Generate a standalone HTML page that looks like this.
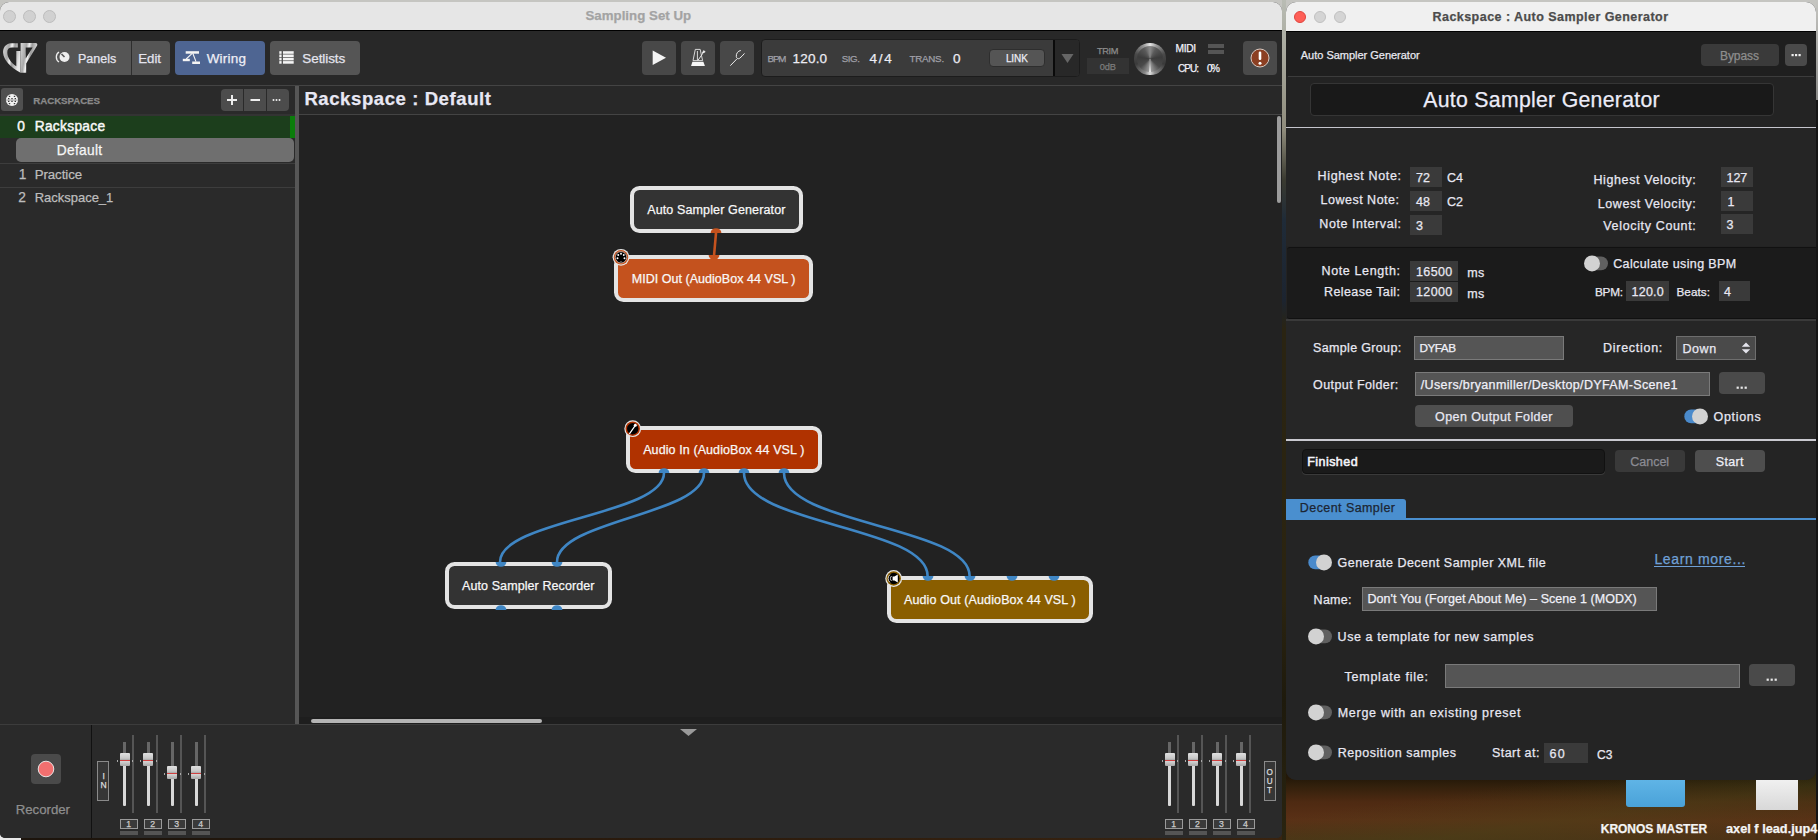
<!DOCTYPE html><html><head><meta charset="utf-8"><style>
*{margin:0;padding:0}
html,body{width:1818px;height:840px;overflow:hidden;background:#3a2c16}
.a{position:absolute}
.t{white-space:nowrap;font-family:"Liberation Sans",sans-serif;-webkit-text-stroke:0.25px currentColor}
</style></head><body>
<div class="a" style="left:0;top:0;width:1818px;height:840px;background:linear-gradient(172deg,rgba(0,0,0,0) 91%,rgba(70,75,25,0.35) 95%,rgba(0,0,0,0) 99%),linear-gradient(#241808 0px,#241808 778px,#32200c 786px,#4e2a12 802px,#5a3016 820px,#4c3216 840px)"></div>
<div class="a" style="left:1816px;top:100px;width:2px;height:740px;background:#151515"></div>
<div class="a" style="left:0px;top:830px;width:1282px;height:10px;background:linear-gradient(90deg,#e8e8e8 0px,#e8e8e8 21px,#1c140c 21px,#2a1a0c 600px,#3a2410 1282px)"></div>
<div class="a" style="left:0px;top:0px;width:1818px;height:14px;background:#c5c5c1"></div>
<div class="a" style="left:1816px;top:0px;width:2px;height:100px;background:linear-gradient(#c5c5c1,#8a8a88)"></div>
<div class="a" style="left:1282px;top:0px;width:4px;height:840px;background:linear-gradient(#b9bcb4 0px,#8f8c7c 130px,#3a3a30 180px,#1f2b38 220px,#1c2430 300px,#2a2412 330px,#2b2410 600px,#1e1a0c 700px,#2a2410 840px)"></div>
<div class="a" style="left:0px;top:2px;width:1282px;height:836px;background:#292929;border-radius:9px 9px 5px 5px;overflow:hidden"></div>
<div class="a" style="left:0px;top:2px;width:1282px;height:28px;background:#e6e6e6;border-radius:9px 9px 0 0"></div>
<div class="a" style="left:0px;top:30px;width:1282px;height:1px;background:#000"></div>
<div class="a" style="left:3px;top:9.5px;width:11px;height:11px;border-radius:50%;background:#d1d1d1;border:0.5px solid #bdbdbd"></div>
<div class="a" style="left:23px;top:9.5px;width:11px;height:11px;border-radius:50%;background:#d1d1d1;border:0.5px solid #bdbdbd"></div>
<div class="a" style="left:43px;top:9.5px;width:11px;height:11px;border-radius:50%;background:#d1d1d1;border:0.5px solid #bdbdbd"></div>
<div class="a t" style="left:585.40px;top:9.00px;font-size:13.25px;line-height:13.25px;color:#a3a3a3;font-weight:700;letter-spacing:0.039px;">Sampling Set Up</div>
<div class="a" style="left:0px;top:31px;width:1282px;height:54px;background:#282828"></div>
<div class="a" style="left:0px;top:85px;width:1282px;height:1px;background:#444"></div>
<div class="a" style="left:46px;top:41px;width:124px;height:34px;background:#555;border-radius:4px"></div>
<div class="a" style="left:131px;top:41px;width:1px;height:34px;background:#2e2e2e"></div>
<div class="a" style="left:175px;top:41px;width:90px;height:34px;background:#4e6592;border-radius:4px"></div>
<div class="a" style="left:270px;top:41px;width:90px;height:34px;background:#555;border-radius:4px"></div>
<div class="a t" style="left:78.00px;top:53.00px;font-size:12.50px;line-height:12.50px;color:#e4e4ee;font-weight:400;letter-spacing:0.030px;">Panels</div>
<div class="a t" style="left:138.30px;top:52.00px;font-size:13.25px;line-height:13.25px;color:#e4e4ee;font-weight:400;letter-spacing:-0.058px;">Edit</div>
<div class="a t" style="left:206.70px;top:52.00px;font-size:13.50px;line-height:13.50px;color:#eeeef6;font-weight:400;letter-spacing:0.190px;">Wiring</div>
<div class="a t" style="left:302.30px;top:52.00px;font-size:13.50px;line-height:13.50px;color:#e4e4ee;font-weight:400;letter-spacing:-0.086px;">Setlists</div>
<svg class="a" style="left:55px;top:49px" width="16" height="16" viewBox="0 0 16 16"><path d="M4 3 A6 6 0 0 0 4 13" stroke="#eee" stroke-width="1.3" fill="none"/><circle cx="9.5" cy="8" r="5" fill="#eee"/><path d="M9.5 8 L6.5 5" stroke="#555" stroke-width="1.6"/></svg>
<svg class="a" style="left:178px;top:44px" width="30" height="24" viewBox="178 44 30 24"><g fill="#f4f4f4"><rect x="185.7" y="51.2" width="13.3" height="2.5"/><rect x="182.8" y="58.8" width="7" height="2.4"/><rect x="192.2" y="61.5" width="7.8" height="2.5"/></g><path d="M192.2 53.3 L186.2 59 M192.8 53.3 L196 61.6" stroke="#f4f4f4" stroke-width="1.1"/></svg>
<svg class="a" style="left:272px;top:44px" width="30" height="24" viewBox="272 44 30 24"><g fill="#f4f4f4"><rect x="279.3" y="51.2" width="2.3" height="2.6"/><rect x="283" y="51.2" width="10.7" height="2.6"/><rect x="279.3" y="54.5" width="2.3" height="2.6"/><rect x="283" y="54.5" width="10.7" height="2.6"/><rect x="279.3" y="57.8" width="2.3" height="2.6"/><rect x="283" y="57.8" width="10.7" height="2.6"/><rect x="279.3" y="61.1" width="2.3" height="2.6"/><rect x="283" y="61.1" width="10.7" height="2.6"/></g></svg>
<svg class="a" style="left:0px;top:38px" width="42" height="40" viewBox="0 0 42 40"><defs><linearGradient id="gpg" x1="0" y1="0" x2="1" y2="0.3"><stop offset="0" stop-color="#d8d8d8"/><stop offset="0.35" stop-color="#a8a8a8"/><stop offset="0.5" stop-color="#f4f4f4"/><stop offset="0.65" stop-color="#9a9a9a"/><stop offset="1" stop-color="#e8e8e8"/></linearGradient></defs>
<path d="M17.8 5.2 L11 5.3 C5.5 5.8 2.8 9.8 3.1 14.8 C3.6 22 10 29 20.5 34.8 L20.5 13 L16.3 13 L16.3 28.2 C11.2 25 7.6 20.2 7.3 14.8 C7.1 11.2 8.8 9.4 12 9.4 L17.8 9.4 Z" fill="url(#gpg)"/>
<path d="M20.6 5 L36 5 C37.4 5.2 37.6 6.8 37 7.8 L26.2 25.5 L26.2 34.8 L20.6 34.8 Z M25.7 9.4 L25.7 20.5 L32.6 9.4 Z" fill="url(#gpg)" fill-rule="evenodd"/></svg>
<div class="a" style="left:642px;top:41px;width:34px;height:34px;background:#484848;border-radius:4px"></div>
<div class="a" style="left:681px;top:41px;width:34px;height:34px;background:#484848;border-radius:4px"></div>
<div class="a" style="left:720px;top:41px;width:34px;height:34px;background:#484848;border-radius:4px"></div>
<svg class="a" style="left:640px;top:38px" width="120" height="40" viewBox="640 38 120 40">
<path d="M652.7 50.6 L666 57.8 L652.7 65 Z" fill="#f4f4f4"/>
<path d="M695.3 49.4 L700.2 49.4 L702.6 60.6 L693 60.6 Z M697.4 51 V60.5" fill="none" stroke="#e8e8e8" stroke-width="0.9"/>
<path d="M692.4 61.8 L703.4 61.8 L704.9 66 L691.1 66 Z" fill="#f6f6f6"/>
<path d="M698 60.3 L703.6 52.2" stroke="#e8e8e8" stroke-width="1"/>
<path d="M702.4 52.8 L703.8 50.6 L705.2 52 Z" fill="#f4f4f4" stroke="#f4f4f4" stroke-width="0.8"/>
<path d="M730.3 65.7 L736.8 59" stroke="#eee" stroke-width="1"/>
<path d="M740.8 50.5 C738 50.8 736 53.5 736.3 56.5 C736.5 58.5 738 59.2 739.5 58.4 C741.5 57 743 55 744.5 53.4" fill="none" stroke="#eee" stroke-width="1"/>
</svg>
<div class="a" style="left:761px;top:39px;width:319px;height:38px;background:#3b3b3b;border:1px solid #1c1c1c;border-radius:4px;box-sizing:border-box"></div>
<div class="a" style="left:1055px;top:40px;width:24px;height:36px;background:#282828;border-radius:0 3px 3px 0"></div>
<div class="a" style="left:1053px;top:40px;width:2px;height:36px;background:#0a0a0a"></div>
<svg class="a" style="left:1061px;top:53px" width="13" height="11" viewBox="0 0 13 11"><path d="M0.5 1 L12.5 1 L6.5 10 Z" fill="#666"/></svg>
<div class="a t" style="left:767.50px;top:54.00px;font-size:9.75px;line-height:9.75px;color:#a0a0a8;font-weight:400;letter-spacing:-1.113px;">BPM</div>
<div class="a t" style="left:792.60px;top:52.00px;font-size:13.50px;line-height:13.50px;color:#ececf4;font-weight:400;letter-spacing:0.188px;">120.0</div>
<div class="a t" style="left:841.80px;top:54.00px;font-size:9.75px;line-height:9.75px;color:#a0a0a8;font-weight:400;letter-spacing:-0.467px;">SIG.</div>
<div class="a t" style="left:869.60px;top:52.00px;font-size:13.50px;line-height:13.50px;color:#ececf4;font-weight:400;letter-spacing:1.725px;">4/4</div>
<div class="a t" style="left:909.40px;top:54.00px;font-size:9.75px;line-height:9.75px;color:#a0a0a8;font-weight:400;letter-spacing:-0.210px;">TRANS.</div>
<div class="a t" style="left:952.90px;top:52.00px;font-size:13.50px;line-height:13.50px;color:#ececf4;font-weight:400;letter-spacing:0.000px;">0</div>
<div class="a" style="left:989px;top:48.6px;width:56px;height:18.800000000000004px;background:#555;border-radius:4px;border:1px solid #2e2e2e;box-sizing:border-box"></div>
<div class="a t" style="left:1005.90px;top:54.00px;font-size:10.00px;line-height:10.00px;color:#ececf4;font-weight:400;letter-spacing:-0.083px;">LINK</div>
<div class="a t" style="left:1097.00px;top:47.00px;font-size:9.25px;line-height:9.25px;color:#8c8c8c;font-weight:400;letter-spacing:-0.375px;">TRIM</div>
<div class="a" style="left:1087px;top:58px;width:42px;height:16px;background:#333"></div>
<div class="a t" style="left:1099.70px;top:63.00px;font-size:9.25px;line-height:9.25px;color:#7c7c7c;font-weight:400;letter-spacing:-0.100px;">0dB</div>
<div class="a" style="left:1134.3px;top:43px;width:31.5px;height:31.5px;border-radius:50%;background:conic-gradient(from 0deg,#e8e8e8 0deg,#9a9a9a 25deg,#4a4a4a 70deg,#3a3a3a 110deg,#8a8a8a 160deg,#e0e0e0 180deg,#8a8a8a 200deg,#3a3a3a 250deg,#4a4a4a 290deg,#9a9a9a 335deg,#e8e8e8 360deg)"></div>
<div class="a" style="left:1136.8px;top:45.5px;width:26.5px;height:26.5px;border-radius:50%;background:conic-gradient(from 0deg,#8a8a8a 0deg,#5a5a5a 30deg,#3c3c3c 80deg,#4a4a4a 130deg,#9a9a9a 175deg,#bdbdbd 180deg,#9a9a9a 185deg,#4a4a4a 230deg,#3c3c3c 280deg,#5a5a5a 330deg,#8a8a8a 360deg)"></div>
<div class="a" style="left:1149px;top:59px;width:2px;height:13px;background:linear-gradient(#777,#e8e8e8)"></div>
<div class="a t" style="left:1175.60px;top:44.00px;font-size:10.25px;line-height:10.25px;color:#f2f2fa;font-weight:400;letter-spacing:-0.342px;">MIDI</div>
<div class="a" style="left:1208px;top:44px;width:16px;height:3.5px;background:#555"></div>
<div class="a" style="left:1208px;top:50px;width:16px;height:3.5px;background:#555"></div>
<div class="a t" style="left:1178.00px;top:64.00px;font-size:10.00px;line-height:10.00px;color:#f2f2fa;font-weight:400;letter-spacing:-0.958px;">CPU:</div>
<div class="a t" style="left:1207.00px;top:64.00px;font-size:10.00px;line-height:10.00px;color:#f2f2fa;font-weight:400;letter-spacing:-1.500px;">0%</div>
<div class="a" style="left:1243px;top:41px;width:34px;height:34px;background:#4a4a4a;border-radius:4px"></div>
<svg class="a" style="left:1249px;top:47px" width="22" height="22" viewBox="0 0 22 22"><circle cx="11" cy="11" r="9" fill="#8b3f22" stroke="#d8c8c0" stroke-width="1"/><rect x="9.7" y="4.5" width="2.6" height="8.5" rx="1.2" fill="#fff"/><circle cx="11" cy="16.2" r="1.5" fill="#fff"/></svg>
<div class="a" style="left:0px;top:86px;width:295px;height:638px;background:#2a2a2a"></div>
<div class="a" style="left:295px;top:86px;width:4px;height:638px;background:#565656"></div>
<div class="a" style="left:1.2px;top:88.3px;width:21.8px;height:22.700000000000003px;background:#505050;border-radius:3px"></div>
<svg class="a" style="left:0px;top:86px" width="30" height="28" viewBox="0 86 30 28"><circle cx="12" cy="100" r="6.1" fill="#f2f2f2"/><rect x="6" y="99.3" width="12" height="1.6" fill="#bdbdbd"/><rect x="8.8" y="95.80000000000001" width="1.4" height="1.2" fill="#3a3a3a"/><rect x="13.8" y="95.80000000000001" width="1.4" height="1.2" fill="#3a3a3a"/><rect x="7.999999999999999" y="98.0" width="1.4" height="1.2" fill="#3a3a3a"/><rect x="11.3" y="98.0" width="1.4" height="1.2" fill="#3a3a3a"/><rect x="14.600000000000001" y="98.0" width="1.4" height="1.2" fill="#3a3a3a"/><rect x="7.999999999999999" y="100.80000000000001" width="1.4" height="1.2" fill="#3a3a3a"/><rect x="11.3" y="100.80000000000001" width="1.4" height="1.2" fill="#3a3a3a"/><rect x="14.600000000000001" y="100.80000000000001" width="1.4" height="1.2" fill="#3a3a3a"/><rect x="8.8" y="103.0" width="1.4" height="1.2" fill="#3a3a3a"/><rect x="13.8" y="103.0" width="1.4" height="1.2" fill="#3a3a3a"/></svg>
<div class="a t" style="left:33.30px;top:96.00px;font-size:9.75px;line-height:9.75px;color:#8a8a8a;font-weight:700;letter-spacing:-0.089px;">RACKSPACES</div>
<div class="a" style="left:221px;top:89px;width:68px;height:22px;background:#4c4c4c;border-radius:4px"></div>
<div class="a" style="left:243px;top:89px;width:1px;height:22px;background:#2a2a2a"></div>
<div class="a" style="left:266px;top:89px;width:1px;height:22px;background:#2a2a2a"></div>
<svg class="a" style="left:221px;top:89px" width="68" height="22" viewBox="0 0 68 22"><path d="M11 6 V16 M6 11 H16" stroke="#eee" stroke-width="2"/><path d="M29.5 11 H39" stroke="#eee" stroke-width="2"/><g fill="#eee"><circle cx="52.5" cy="11" r="1"/><circle cx="55.5" cy="11" r="1"/><circle cx="58.5" cy="11" r="1"/></g></svg>
<div class="a" style="left:0px;top:114px;width:295px;height:2px;background:#333"></div>
<div class="a" style="left:0px;top:116px;width:290px;height:22px;background:#1c3e1c"></div>
<div class="a" style="left:290px;top:116px;width:5px;height:22px;background:#0b7d0b"></div>
<div class="a t" style="left:17.20px;top:120.00px;font-size:13.75px;line-height:13.75px;color:#f8f8f8;font-weight:400;letter-spacing:0.000px;-webkit-text-stroke:0.45px currentColor">0</div>
<div class="a t" style="left:34.70px;top:120.00px;font-size:13.75px;line-height:13.75px;color:#f8f8f8;font-weight:400;letter-spacing:0.300px;-webkit-text-stroke:0.45px currentColor">Rackspace</div>
<div class="a" style="left:15.8px;top:138.3px;width:278.2px;height:23.299999999999983px;background:#6f6f6f;border-radius:5px"></div>
<div class="a t" style="left:56.70px;top:144.00px;font-size:13.75px;line-height:13.75px;color:#f6f6f6;font-weight:400;letter-spacing:0.312px;">Default</div>
<div class="a" style="left:0px;top:162.8px;width:295px;height:1.1999999999999886px;background:#3d3d3d"></div>
<div class="a t" style="left:18.75px;top:168.00px;font-size:13.75px;line-height:13.75px;color:#bdbdbd;font-weight:400;letter-spacing:0.000px;">1</div>
<div class="a t" style="left:34.70px;top:168.00px;font-size:13.25px;line-height:13.25px;color:#bdbdbd;font-weight:400;letter-spacing:-0.068px;">Practice</div>
<div class="a" style="left:0px;top:186.7px;width:295px;height:1.1000000000000227px;background:#3d3d3d"></div>
<div class="a t" style="left:18.20px;top:191.00px;font-size:13.75px;line-height:13.75px;color:#bdbdbd;font-weight:400;letter-spacing:0.000px;">2</div>
<div class="a t" style="left:34.70px;top:191.00px;font-size:13.00px;line-height:13.00px;color:#bdbdbd;font-weight:400;letter-spacing:-0.015px;">Rackspace_1</div>
<div class="a" style="left:299px;top:86px;width:983px;height:28px;background:#282828"></div>
<div class="a" style="left:299px;top:114px;width:983px;height:1px;background:#444"></div>
<div class="a t" style="left:304.40px;top:90.00px;font-size:18.50px;line-height:18.50px;color:#e8e8f4;font-weight:700;letter-spacing:0.596px;">Rackspace : Default</div>
<div class="a" style="left:299px;top:115px;width:983px;height:602px;background:#222"></div>
<div class="a" style="left:1277px;top:116px;width:4px;height:87px;background:#9c9c9c;border-radius:2px"></div>
<div class="a" style="left:299px;top:717px;width:983px;height:7px;background:#1e1e1e"></div>
<div class="a" style="left:311px;top:719px;width:231px;height:4px;background:#b4b4b4;border-radius:2px"></div>
<svg class="a" style="left:299px;top:115px" width="983" height="602" viewBox="299 115 983 602">
<g fill="none" stroke="#3f86c4" stroke-width="2.6">
<path d="M664 473 C664 515 500 520 500 562"/>
<path d="M704 473 C704 515 557 520 557 562"/>
<path d="M744 473 C744 525 927.6 526 927.6 576"/>
<path d="M784 473 C784 525 969.6 526 969.6 576"/>
</g>
<path d="M716 233 L714 256" stroke="#c4521e" stroke-width="2.6"/>
</svg>
<div class="a" style="left:630px;top:186px;width:173px;height:47px;background:#333;border:4.2px solid #e4e4e4;border-radius:9.5px;box-sizing:border-box"></div>
<div class="a t" style="left:647.20px;top:204.00px;font-size:12.50px;line-height:12.50px;color:#f8f8f8;font-weight:400;letter-spacing:0.129px;">Auto Sampler Generator</div>
<div class="a" style="left:614px;top:255px;width:199px;height:46.5px;background:#c4521e;border:4.2px solid #e4e4e4;border-radius:9.5px;box-sizing:border-box"></div>
<div class="a t" style="left:631.70px;top:273.00px;font-size:12.50px;line-height:12.50px;color:#f8f8f8;font-weight:400;letter-spacing:0.037px;">MIDI Out (AudioBox 44 VSL )</div>
<div class="a" style="left:626px;top:426px;width:196px;height:47px;background:#b03200;border:4.2px solid #e4e4e4;border-radius:9.5px;box-sizing:border-box"></div>
<div class="a t" style="left:643.20px;top:444.00px;font-size:12.50px;line-height:12.50px;color:#f8f8f8;font-weight:400;letter-spacing:0.095px;">Audio In (AudioBox 44 VSL )</div>
<div class="a" style="left:445px;top:562px;width:167px;height:47px;background:#333;border:4.2px solid #e4e4e4;border-radius:9.5px;box-sizing:border-box"></div>
<div class="a t" style="left:462.00px;top:580.00px;font-size:12.50px;line-height:12.50px;color:#f8f8f8;font-weight:400;letter-spacing:0.094px;">Auto Sampler Recorder</div>
<div class="a" style="left:887px;top:576px;width:206px;height:47px;background:#8a5e00;border:4.2px solid #e4e4e4;border-radius:9.5px;box-sizing:border-box"></div>
<div class="a t" style="left:904.00px;top:594.00px;font-size:12.50px;line-height:12.50px;color:#f8f8f8;font-weight:400;letter-spacing:0.123px;">Audio Out (AudioBox 44 VSL )</div>
<svg class="a" style="left:710px;top:226px" width="12" height="8" viewBox="0 0 12 8"><path d="M0.6 7 A5.4 4.8 0 0 1 11.4 7 Z" fill="#c4521e"/></svg>
<svg class="a" style="left:708px;top:254px" width="12" height="8" viewBox="0 0 12 8"><path d="M0.6 1 L11.4 1 A5.4 4.8 0 0 1 0.6 1 Z" fill="#c4521e"/></svg>
<svg class="a" style="left:658.4px;top:466px" width="12" height="8" viewBox="0 0 12 8"><path d="M0.6 7 A5.4 4.8 0 0 1 11.4 7 Z" fill="#3f86c4"/></svg>
<svg class="a" style="left:698.3px;top:466px" width="12" height="8" viewBox="0 0 12 8"><path d="M0.6 7 A5.4 4.8 0 0 1 11.4 7 Z" fill="#3f86c4"/></svg>
<svg class="a" style="left:738.4px;top:466px" width="12" height="8" viewBox="0 0 12 8"><path d="M0.6 7 A5.4 4.8 0 0 1 11.4 7 Z" fill="#3f86c4"/></svg>
<svg class="a" style="left:778.4px;top:466px" width="12" height="8" viewBox="0 0 12 8"><path d="M0.6 7 A5.4 4.8 0 0 1 11.4 7 Z" fill="#3f86c4"/></svg>
<svg class="a" style="left:494.5px;top:561px" width="12" height="8" viewBox="0 0 12 8"><path d="M0.6 1 L11.4 1 A5.4 4.8 0 0 1 0.6 1 Z" fill="#3f86c4"/></svg>
<svg class="a" style="left:494.5px;top:602.5px" width="12" height="8" viewBox="0 0 12 8"><path d="M0.6 7 A5.4 4.8 0 0 1 11.4 7 Z" fill="#3f86c4"/></svg>
<svg class="a" style="left:551.4px;top:561px" width="12" height="8" viewBox="0 0 12 8"><path d="M0.6 1 L11.4 1 A5.4 4.8 0 0 1 0.6 1 Z" fill="#3f86c4"/></svg>
<svg class="a" style="left:551.4px;top:602.5px" width="12" height="8" viewBox="0 0 12 8"><path d="M0.6 7 A5.4 4.8 0 0 1 11.4 7 Z" fill="#3f86c4"/></svg>
<svg class="a" style="left:921.6px;top:575px" width="12" height="8" viewBox="0 0 12 8"><path d="M0.6 1 L11.4 1 A5.4 4.8 0 0 1 0.6 1 Z" fill="#3f86c4"/></svg>
<svg class="a" style="left:963.6px;top:575px" width="12" height="8" viewBox="0 0 12 8"><path d="M0.6 1 L11.4 1 A5.4 4.8 0 0 1 0.6 1 Z" fill="#3f86c4"/></svg>
<svg class="a" style="left:1005.5px;top:575px" width="12" height="8" viewBox="0 0 12 8"><path d="M0.6 1 L11.4 1 A5.4 4.8 0 0 1 0.6 1 Z" fill="#3f86c4"/></svg>
<svg class="a" style="left:1047.5px;top:575px" width="12" height="8" viewBox="0 0 12 8"><path d="M0.6 1 L11.4 1 A5.4 4.8 0 0 1 0.6 1 Z" fill="#3f86c4"/></svg>
<svg class="a" style="left:299px;top:115px" width="983" height="602" viewBox="299 115 983 602">
<circle cx="621" cy="257.3" r="8.4" fill="#e6e6e6"/><circle cx="621" cy="257.3" r="7.2" fill="#c4521e"/><circle cx="621" cy="257.3" r="5.7" fill="#000"/><circle cx="621" cy="257.3" r="5.7" fill="none" stroke="#ddd" stroke-width="0.6"/><circle cx="621.00" cy="253.70" r="0.95" fill="#fff"/><circle cx="618.24" cy="254.99" r="0.95" fill="#fff"/><circle cx="623.76" cy="254.99" r="0.95" fill="#fff"/><circle cx="617.52" cy="258.23" r="0.95" fill="#fff"/><circle cx="624.48" cy="258.23" r="0.95" fill="#fff"/><path d="M619.8 261.6 A1.4 1.2 0 0 1 622.2 261.6" fill="#fff"/>
<circle cx="632.7" cy="428.7" r="8.4" fill="#e6e6e6"/><circle cx="632.7" cy="428.7" r="7.2" fill="#b03200"/><circle cx="632.7" cy="428.7" r="5.7" fill="#000"/><path d="M629.6 433.6 L635 425.8" stroke="#fff" stroke-width="1.2" stroke-linecap="round"/><circle cx="635.3" cy="425.3" r="1.5" fill="#fff"/>
<circle cx="893.7" cy="578.5" r="8.4" fill="#e6e6e6"/><circle cx="893.7" cy="578.5" r="7.2" fill="#8a5e00"/><circle cx="893.7" cy="578.5" r="5.7" fill="#000"/><path d="M892.6 576.6 L894.4 576.6 L897.8 574.4 L897.8 582.6 L894.4 580.4 L892.6 580.4 Z" fill="#fff"/><path d="M891.6 576 A3.2 3.2 0 0 0 891.6 581 M890 574.6 A5 5 0 0 0 890 582.4" stroke="#fff" stroke-width="0.8" fill="none"/>
</svg>
<div class="a" style="left:0px;top:724px;width:1282px;height:1px;background:#3c3c3c"></div>
<div class="a" style="left:0px;top:725px;width:1282px;height:113px;background:#2a2a2a;border-radius:0 0 5px 5px"></div>
<div class="a" style="left:91px;top:725px;width:1px;height:113px;background:#111"></div>
<svg class="a" style="left:679px;top:728px" width="19" height="9" viewBox="0 0 19 9"><path d="M1 1 L18 1 L9.5 8 Z" fill="#9a9a9a"/></svg>
<div class="a" style="left:31px;top:754px;width:30px;height:30px;background:#4a4a4a;border-radius:4px"></div>
<svg class="a" style="left:36px;top:758.5px" width="20" height="20" viewBox="0 0 20 20"><circle cx="10" cy="10" r="7.8" fill="#f26f6f" stroke="#f0f0f0" stroke-width="0.9"/></svg>
<div class="a t" style="left:15.70px;top:803.00px;font-size:13.25px;line-height:13.25px;color:#8e8e8e;font-weight:400;letter-spacing:-0.029px;">Recorder</div>
<div class="a" style="left:97px;top:761px;width:12px;height:40px;border:1px solid #8a8a8a;background:#363636;box-sizing:border-box"></div>
<div class="a t" style="left:102.40px;top:772.00px;font-size:8.50px;line-height:8.50px;color:#ddd;font-weight:400;letter-spacing:0.000px;">I</div>
<div class="a t" style="left:100.60px;top:781.00px;font-size:8.50px;line-height:8.50px;color:#ddd;font-weight:400;letter-spacing:0.000px;">N</div>
<div class="a" style="left:123.0px;top:741.5px;width:3.0px;height:64.5px;background:#d8d8d8;border-radius:1px"></div>
<div class="a" style="left:123.0px;top:741.5px;width:3.0px;height:11.5px;background:#666"></div>
<div class="a" style="left:132px;top:734.7px;width:2px;height:78.29999999999995px;background:#555"></div>
<div class="a" style="left:119.5px;top:753px;width:10.0px;height:12.5px;background:linear-gradient(#e0e0e0,#c8c8c8 40%,#b0b0b0 50%,#d8d8d8 60%,#a8a8a8);border-radius:1px"></div>
<div class="a" style="left:119.5px;top:759.6px;width:10.0px;height:0.6999999999999318px;background:#d04040"></div>
<div class="a" style="left:116.5px;top:760px;width:0.5999999999999943px;height:2px;background:#aaa"></div>
<div class="a" style="left:131.9px;top:760px;width:0.5999999999999943px;height:2px;background:#aaa"></div>
<div class="a" style="left:120px;top:819px;width:18px;height:10px;border:1px solid #9a9a9a;background:#3a3a3a;box-sizing:border-box"></div>
<div class="a t" style="left:126.30px;top:820.32px;font-size:8.72px;line-height:8.72px;color:#ccc;font-weight:400;letter-spacing:0.000px;">1</div>
<div class="a" style="left:120px;top:831px;width:18px;height:4px;background:#555"></div>
<div class="a" style="left:146.7px;top:741.5px;width:3.0px;height:64.5px;background:#d8d8d8;border-radius:1px"></div>
<div class="a" style="left:146.7px;top:741.5px;width:3.0px;height:11.5px;background:#666"></div>
<div class="a" style="left:156px;top:734.7px;width:2px;height:78.29999999999995px;background:#555"></div>
<div class="a" style="left:143.2px;top:753px;width:10.0px;height:12.5px;background:linear-gradient(#e0e0e0,#c8c8c8 40%,#b0b0b0 50%,#d8d8d8 60%,#a8a8a8);border-radius:1px"></div>
<div class="a" style="left:143.2px;top:759.6px;width:10.0px;height:0.6999999999999318px;background:#d04040"></div>
<div class="a" style="left:140.2px;top:760px;width:0.5999999999999943px;height:2px;background:#aaa"></div>
<div class="a" style="left:155.6px;top:760px;width:0.5999999999999943px;height:2px;background:#aaa"></div>
<div class="a" style="left:144px;top:819px;width:18px;height:10px;border:1px solid #9a9a9a;background:#3a3a3a;box-sizing:border-box"></div>
<div class="a t" style="left:150.30px;top:820.32px;font-size:8.72px;line-height:8.72px;color:#ccc;font-weight:400;letter-spacing:0.000px;">2</div>
<div class="a" style="left:144px;top:831px;width:18px;height:4px;background:#555"></div>
<div class="a" style="left:170.8px;top:741.5px;width:3.0px;height:64.5px;background:#d8d8d8;border-radius:1px"></div>
<div class="a" style="left:170.8px;top:741.5px;width:3.0px;height:24.5px;background:#666"></div>
<div class="a" style="left:180px;top:734.7px;width:2px;height:78.29999999999995px;background:#555"></div>
<div class="a" style="left:167.3px;top:766px;width:10.0px;height:12.5px;background:linear-gradient(#e0e0e0,#c8c8c8 40%,#b0b0b0 50%,#d8d8d8 60%,#a8a8a8);border-radius:1px"></div>
<div class="a" style="left:167.3px;top:772.6px;width:10.0px;height:0.6999999999999318px;background:#d04040"></div>
<div class="a" style="left:164.3px;top:773px;width:0.5999999999999943px;height:2px;background:#aaa"></div>
<div class="a" style="left:179.70000000000002px;top:773px;width:0.5999999999999943px;height:2px;background:#aaa"></div>
<div class="a" style="left:168px;top:819px;width:18px;height:10px;border:1px solid #9a9a9a;background:#3a3a3a;box-sizing:border-box"></div>
<div class="a t" style="left:174.30px;top:820.32px;font-size:8.72px;line-height:8.72px;color:#ccc;font-weight:400;letter-spacing:0.000px;">3</div>
<div class="a" style="left:168px;top:831px;width:18px;height:4px;background:#555"></div>
<div class="a" style="left:194.9px;top:741.5px;width:3.0px;height:64.5px;background:#d8d8d8;border-radius:1px"></div>
<div class="a" style="left:194.9px;top:741.5px;width:3.0px;height:24.5px;background:#666"></div>
<div class="a" style="left:204px;top:734.7px;width:2px;height:78.29999999999995px;background:#555"></div>
<div class="a" style="left:191.4px;top:766px;width:10.0px;height:12.5px;background:linear-gradient(#e0e0e0,#c8c8c8 40%,#b0b0b0 50%,#d8d8d8 60%,#a8a8a8);border-radius:1px"></div>
<div class="a" style="left:191.4px;top:772.6px;width:10.0px;height:0.6999999999999318px;background:#d04040"></div>
<div class="a" style="left:188.4px;top:773px;width:0.5999999999999943px;height:2px;background:#aaa"></div>
<div class="a" style="left:203.8px;top:773px;width:0.5999999999999943px;height:2px;background:#aaa"></div>
<div class="a" style="left:192px;top:819px;width:18px;height:10px;border:1px solid #9a9a9a;background:#3a3a3a;box-sizing:border-box"></div>
<div class="a t" style="left:198.30px;top:820.32px;font-size:8.72px;line-height:8.72px;color:#ccc;font-weight:400;letter-spacing:0.000px;">4</div>
<div class="a" style="left:192px;top:831px;width:18px;height:4px;background:#555"></div>
<div class="a" style="left:1168.0px;top:741.5px;width:3.0px;height:64.5px;background:#d8d8d8;border-radius:1px"></div>
<div class="a" style="left:1168.0px;top:741.5px;width:3.0px;height:11.799999999999955px;background:#666"></div>
<div class="a" style="left:1177.0px;top:734.7px;width:2.0px;height:78.29999999999995px;background:#555"></div>
<div class="a" style="left:1164.5px;top:753.3px;width:10.0px;height:12.5px;background:linear-gradient(#e0e0e0,#c8c8c8 40%,#b0b0b0 50%,#d8d8d8 60%,#a8a8a8);border-radius:1px"></div>
<div class="a" style="left:1164.5px;top:759.9px;width:10.0px;height:0.6999999999999318px;background:#d04040"></div>
<div class="a" style="left:1161.5px;top:760.3px;width:0.599999999999909px;height:2.0px;background:#aaa"></div>
<div class="a" style="left:1176.9px;top:760.3px;width:0.599999999999909px;height:2.0px;background:#aaa"></div>
<div class="a" style="left:1165.0px;top:819px;width:18.0px;height:10px;border:1px solid #9a9a9a;background:#3a3a3a;box-sizing:border-box"></div>
<div class="a t" style="left:1171.30px;top:820.32px;font-size:8.72px;line-height:8.72px;color:#ccc;font-weight:400;letter-spacing:0.000px;">1</div>
<div class="a" style="left:1165.0px;top:831px;width:18.0px;height:4px;background:#555"></div>
<div class="a" style="left:1191.8px;top:741.5px;width:3.0px;height:64.5px;background:#d8d8d8;border-radius:1px"></div>
<div class="a" style="left:1191.8px;top:741.5px;width:3.0px;height:11.799999999999955px;background:#666"></div>
<div class="a" style="left:1200.8px;top:734.7px;width:2.0px;height:78.29999999999995px;background:#555"></div>
<div class="a" style="left:1188.3px;top:753.3px;width:10.0px;height:12.5px;background:linear-gradient(#e0e0e0,#c8c8c8 40%,#b0b0b0 50%,#d8d8d8 60%,#a8a8a8);border-radius:1px"></div>
<div class="a" style="left:1188.3px;top:759.9px;width:10.0px;height:0.6999999999999318px;background:#d04040"></div>
<div class="a" style="left:1185.3px;top:760.3px;width:0.599999999999909px;height:2.0px;background:#aaa"></div>
<div class="a" style="left:1200.7px;top:760.3px;width:0.599999999999909px;height:2.0px;background:#aaa"></div>
<div class="a" style="left:1188.8px;top:819px;width:18.0px;height:10px;border:1px solid #9a9a9a;background:#3a3a3a;box-sizing:border-box"></div>
<div class="a t" style="left:1195.10px;top:820.32px;font-size:8.72px;line-height:8.72px;color:#ccc;font-weight:400;letter-spacing:0.000px;">2</div>
<div class="a" style="left:1188.8px;top:831px;width:18.0px;height:4px;background:#555"></div>
<div class="a" style="left:1215.8px;top:741.5px;width:3.0px;height:64.5px;background:#d8d8d8;border-radius:1px"></div>
<div class="a" style="left:1215.8px;top:741.5px;width:3.0px;height:11.799999999999955px;background:#666"></div>
<div class="a" style="left:1224.8px;top:734.7px;width:2.0px;height:78.29999999999995px;background:#555"></div>
<div class="a" style="left:1212.3px;top:753.3px;width:10.0px;height:12.5px;background:linear-gradient(#e0e0e0,#c8c8c8 40%,#b0b0b0 50%,#d8d8d8 60%,#a8a8a8);border-radius:1px"></div>
<div class="a" style="left:1212.3px;top:759.9px;width:10.0px;height:0.6999999999999318px;background:#d04040"></div>
<div class="a" style="left:1209.3px;top:760.3px;width:0.599999999999909px;height:2.0px;background:#aaa"></div>
<div class="a" style="left:1224.7px;top:760.3px;width:0.599999999999909px;height:2.0px;background:#aaa"></div>
<div class="a" style="left:1212.8px;top:819px;width:18.0px;height:10px;border:1px solid #9a9a9a;background:#3a3a3a;box-sizing:border-box"></div>
<div class="a t" style="left:1219.10px;top:820.32px;font-size:8.72px;line-height:8.72px;color:#ccc;font-weight:400;letter-spacing:0.000px;">3</div>
<div class="a" style="left:1212.8px;top:831px;width:18.0px;height:4px;background:#555"></div>
<div class="a" style="left:1239.8px;top:741.5px;width:3.0px;height:64.5px;background:#d8d8d8;border-radius:1px"></div>
<div class="a" style="left:1239.8px;top:741.5px;width:3.0px;height:11.799999999999955px;background:#666"></div>
<div class="a" style="left:1248.8px;top:734.7px;width:2.0px;height:78.29999999999995px;background:#555"></div>
<div class="a" style="left:1236.3px;top:753.3px;width:10.0px;height:12.5px;background:linear-gradient(#e0e0e0,#c8c8c8 40%,#b0b0b0 50%,#d8d8d8 60%,#a8a8a8);border-radius:1px"></div>
<div class="a" style="left:1236.3px;top:759.9px;width:10.0px;height:0.6999999999999318px;background:#d04040"></div>
<div class="a" style="left:1233.3px;top:760.3px;width:0.599999999999909px;height:2.0px;background:#aaa"></div>
<div class="a" style="left:1248.7px;top:760.3px;width:0.599999999999909px;height:2.0px;background:#aaa"></div>
<div class="a" style="left:1236.8px;top:819px;width:18.0px;height:10px;border:1px solid #9a9a9a;background:#3a3a3a;box-sizing:border-box"></div>
<div class="a t" style="left:1243.10px;top:820.32px;font-size:8.72px;line-height:8.72px;color:#ccc;font-weight:400;letter-spacing:0.000px;">4</div>
<div class="a" style="left:1236.8px;top:831px;width:18.0px;height:4px;background:#555"></div>
<div class="a" style="left:1264px;top:761px;width:12px;height:40px;border:1px solid #8a8a8a;background:#363636;box-sizing:border-box"></div>
<div class="a t" style="left:1266.50px;top:768.61px;font-size:8.14px;line-height:8.14px;color:#ddd;font-weight:400;letter-spacing:0.000px;">O</div>
<div class="a t" style="left:1266.80px;top:777.61px;font-size:8.14px;line-height:8.14px;color:#ddd;font-weight:400;letter-spacing:0.000px;">U</div>
<div class="a t" style="left:1267.00px;top:786.61px;font-size:8.14px;line-height:8.14px;color:#ddd;font-weight:400;letter-spacing:0.000px;">T</div>
<div class="a" style="left:1286px;top:2px;width:530px;height:777.5px;background:#232323;border-radius:10px"></div>
<div class="a" style="left:1286px;top:2px;width:530px;height:29px;background:#f0f0f0;border-radius:10px 10px 0 0"></div>
<div class="a" style="left:1286px;top:31px;width:530px;height:1px;background:#000"></div>
<div class="a" style="left:1294px;top:10.5px;width:12px;height:12px;border-radius:50%;background:#fe5f57;box-sizing:border-box;border:0.5px solid #e0443e"></div>
<div class="a" style="left:1314px;top:10.5px;width:12px;height:12px;border-radius:50%;background:#d4d4d4;box-sizing:border-box;border:0.5px solid #c0c0c0"></div>
<div class="a" style="left:1334px;top:10.5px;width:12px;height:12px;border-radius:50%;background:#d4d4d4;box-sizing:border-box;border:0.5px solid #c0c0c0"></div>
<div class="a t" style="left:1432.50px;top:11.00px;font-size:12.50px;line-height:12.50px;color:#4c4c4c;font-weight:700;letter-spacing:0.458px;">Rackspace : Auto Sampler Generator</div>
<div class="a" style="left:1286px;top:32px;width:530px;height:44px;background:#1f1f1f"></div>
<div class="a t" style="left:1300.80px;top:50.00px;font-size:11.00px;line-height:11.00px;color:#e8e8f0;font-weight:400;letter-spacing:-0.017px;">Auto Sampler Generator</div>
<div class="a" style="left:1701px;top:44px;width:78px;height:22px;background:#3a3a3a;border-radius:4px"></div>
<div class="a t" style="left:1720.00px;top:50.00px;font-size:12.00px;line-height:12.00px;color:#8e8e8e;font-weight:400;letter-spacing:-0.075px;">Bypass</div>
<div class="a" style="left:1785px;top:44px;width:22px;height:22px;background:#4a4a4a;border-radius:4px"></div>
<svg class="a" style="left:1785px;top:44px" width="22" height="22"><g fill="#f0f0f0"><rect x="6.5" y="10" width="2.2" height="2.2"/><rect x="10" y="10" width="2.2" height="2.2"/><rect x="13.5" y="10" width="2.2" height="2.2"/></g></svg>
<div class="a" style="left:1288px;top:75.5px;width:526px;height:1.0px;background:#3c3c3c"></div>
<div class="a" style="left:1286px;top:76.5px;width:530px;height:50.5px;background:#232323"></div>
<div class="a" style="left:1310px;top:83px;width:464px;height:32.5px;background:#191919;border:1px solid #353535;border-radius:4px;box-sizing:border-box"></div>
<div class="a t" style="left:1423.30px;top:90.00px;font-size:21.25px;line-height:21.25px;color:#ececf8;font-weight:400;letter-spacing:0.287px;">Auto Sampler Generator</div>
<div class="a" style="left:1286px;top:127px;width:530px;height:1px;background:#c4c4cc"></div>
<div class="a" style="left:1286px;top:128px;width:530px;height:118px;background:#252525"></div>
<div class="a" style="left:1410px;top:167.1px;width:32px;height:19.599999999999994px;background:#3a3a3a"></div>
<div class="a" style="left:1410px;top:190.9px;width:32px;height:19.799999999999983px;background:#3a3a3a"></div>
<div class="a" style="left:1410px;top:215px;width:32px;height:19.80000000000001px;background:#3a3a3a"></div>
<div class="a t" style="left:1317.60px;top:170.00px;font-size:12.50px;line-height:12.50px;color:#e8e8f2;font-weight:400;letter-spacing:0.638px;">Highest Note:</div>
<div class="a t" style="left:1320.60px;top:194.00px;font-size:12.50px;line-height:12.50px;color:#e8e8f2;font-weight:400;letter-spacing:0.491px;">Lowest Note:</div>
<div class="a t" style="left:1319.30px;top:218.00px;font-size:12.50px;line-height:12.50px;color:#e8e8f2;font-weight:400;letter-spacing:0.563px;">Note Interval:</div>
<div class="a t" style="left:1416.00px;top:172.00px;font-size:12.50px;line-height:12.50px;color:#e8e8f2;font-weight:400;letter-spacing:0.025px;">72</div>
<div class="a t" style="left:1416.00px;top:196.00px;font-size:12.50px;line-height:12.50px;color:#e8e8f2;font-weight:400;letter-spacing:0.025px;">48</div>
<div class="a t" style="left:1416.00px;top:220.00px;font-size:12.50px;line-height:12.50px;color:#e8e8f2;font-weight:400;letter-spacing:0.000px;">3</div>
<div class="a t" style="left:1447.00px;top:172.00px;font-size:12.50px;line-height:12.50px;color:#e8e8f2;font-weight:400;letter-spacing:-0.100px;">C4</div>
<div class="a t" style="left:1447.00px;top:196.00px;font-size:12.50px;line-height:12.50px;color:#e8e8f2;font-weight:400;letter-spacing:-0.100px;">C2</div>
<div class="a" style="left:1721.1px;top:167.1px;width:31.700000000000045px;height:19.599999999999994px;background:#3a3a3a"></div>
<div class="a" style="left:1721.1px;top:191.2px;width:31.700000000000045px;height:19.5px;background:#3a3a3a"></div>
<div class="a" style="left:1721.1px;top:214.3px;width:31.700000000000045px;height:19.5px;background:#3a3a3a"></div>
<div class="a t" style="left:1593.40px;top:174.00px;font-size:12.50px;line-height:12.50px;color:#e8e8f2;font-weight:400;letter-spacing:0.627px;">Highest Velocity:</div>
<div class="a t" style="left:1597.80px;top:198.00px;font-size:12.50px;line-height:12.50px;color:#e8e8f2;font-weight:400;letter-spacing:0.558px;">Lowest Velocity:</div>
<div class="a t" style="left:1603.30px;top:220.00px;font-size:12.50px;line-height:12.50px;color:#e8e8f2;font-weight:400;letter-spacing:0.652px;">Velocity Count:</div>
<div class="a t" style="left:1726.50px;top:172.00px;font-size:12.50px;line-height:12.50px;color:#e8e8f2;font-weight:400;letter-spacing:-0.038px;">127</div>
<div class="a t" style="left:1727.50px;top:196.00px;font-size:12.50px;line-height:12.50px;color:#e8e8f2;font-weight:400;letter-spacing:0.000px;">1</div>
<div class="a t" style="left:1726.50px;top:219.00px;font-size:12.50px;line-height:12.50px;color:#e8e8f2;font-weight:400;letter-spacing:0.000px;">3</div>
<div class="a" style="left:1287px;top:246.5px;width:529px;height:72.5px;background:#1b1b1b;border-top:1px solid #111;border-bottom:1px solid #111;border-radius:3px 0 0 3px;box-sizing:border-box"></div>
<div class="a" style="left:1410.1px;top:261px;width:47.80000000000018px;height:20.100000000000023px;background:#3a3a3a"></div>
<div class="a" style="left:1410.1px;top:282.2px;width:47.80000000000018px;height:19.5px;background:#3a3a3a"></div>
<div class="a t" style="left:1321.50px;top:265.00px;font-size:12.50px;line-height:12.50px;color:#e8e8f2;font-weight:400;letter-spacing:0.625px;">Note Length:</div>
<div class="a t" style="left:1324.10px;top:286.00px;font-size:12.50px;line-height:12.50px;color:#e8e8f2;font-weight:400;letter-spacing:0.377px;">Release Tail:</div>
<div class="a t" style="left:1416.00px;top:266.00px;font-size:12.50px;line-height:12.50px;color:#e8e8f2;font-weight:400;letter-spacing:0.387px;">16500</div>
<div class="a t" style="left:1416.00px;top:286.00px;font-size:12.50px;line-height:12.50px;color:#e8e8f2;font-weight:400;letter-spacing:0.387px;">12000</div>
<div class="a t" style="left:1467.30px;top:267.00px;font-size:12.50px;line-height:12.50px;color:#e8e8f2;font-weight:400;letter-spacing:0.375px;">ms</div>
<div class="a t" style="left:1467.30px;top:288.00px;font-size:12.50px;line-height:12.50px;color:#e8e8f2;font-weight:400;letter-spacing:0.375px;">ms</div>
<svg class="a" style="left:1584px;top:254.6px" width="25" height="17" viewBox="0 0 25 17"><rect x="1.7" y="1.6" width="22.3" height="13.6" rx="6.8" fill="#606060"/><circle cx="8" cy="8.4" r="8" fill="#d2d2d2"/></svg>
<div class="a t" style="left:1613.20px;top:258.00px;font-size:12.50px;line-height:12.50px;color:#e8e8f2;font-weight:400;letter-spacing:0.389px;">Calculate using BPM</div>
<div class="a" style="left:1626px;top:281.2px;width:42.90000000000009px;height:19.5px;background:#3a3a3a"></div>
<div class="a" style="left:1719.1px;top:281.2px;width:30.700000000000045px;height:19.5px;background:#3a3a3a"></div>
<div class="a t" style="left:1594.90px;top:286.00px;font-size:11.75px;line-height:11.75px;color:#e8e8f2;font-weight:400;letter-spacing:-0.217px;">BPM:</div>
<div class="a t" style="left:1631.50px;top:286.00px;font-size:12.50px;line-height:12.50px;color:#e8e8f2;font-weight:400;letter-spacing:0.238px;">120.0</div>
<div class="a t" style="left:1676.50px;top:286.00px;font-size:11.75px;line-height:11.75px;color:#e8e8f2;font-weight:400;letter-spacing:0.030px;">Beats:</div>
<div class="a t" style="left:1724.00px;top:286.00px;font-size:12.50px;line-height:12.50px;color:#e8e8f2;font-weight:400;letter-spacing:0.000px;">4</div>
<div class="a" style="left:1286px;top:319px;width:530px;height:1.5px;background:#3a3a3a"></div>
<div class="a" style="left:1286px;top:320.5px;width:530px;height:118.5px;background:#262626"></div>
<div class="a" style="left:1414px;top:336.2px;width:150px;height:23.600000000000023px;background:#555;border:1px solid #7a7a7a;box-sizing:border-box"></div>
<div class="a t" style="left:1313.10px;top:342.00px;font-size:12.50px;line-height:12.50px;color:#e8e8f2;font-weight:400;letter-spacing:0.331px;">Sample Group:</div>
<div class="a t" style="left:1419.60px;top:342.00px;font-size:11.75px;line-height:11.75px;color:#f0f0f8;font-weight:400;letter-spacing:-0.525px;">DYFAB</div>
<div class="a" style="left:1676px;top:336px;width:80px;height:23.69999999999999px;background:#4a4a4a;border:1px solid #6e6e6e;box-sizing:border-box"></div>
<div class="a t" style="left:1603.00px;top:342.00px;font-size:12.50px;line-height:12.50px;color:#e8e8f2;font-weight:400;letter-spacing:0.728px;">Direction:</div>
<div class="a t" style="left:1682.50px;top:343.00px;font-size:12.50px;line-height:12.50px;color:#e8e8f2;font-weight:400;letter-spacing:0.567px;">Down</div>
<svg class="a" style="left:1741px;top:342px" width="10" height="12" viewBox="0 0 10 12"><path d="M0.8 4.8 L5 0.6 L9.2 4.8 Z M0.8 7.2 L5 11.4 L9.2 7.2 Z" fill="#e4e4ec"/></svg>
<div class="a" style="left:1414.9px;top:371.9px;width:295.1999999999998px;height:23.80000000000001px;background:#555;border:1px solid #7a7a7a;box-sizing:border-box"></div>
<div class="a t" style="left:1313.10px;top:379.00px;font-size:12.50px;line-height:12.50px;color:#e8e8f2;font-weight:400;letter-spacing:0.402px;">Output Folder:</div>
<div class="a t" style="left:1420.80px;top:379.00px;font-size:12.50px;line-height:12.50px;color:#f0f0f8;font-weight:400;letter-spacing:0.355px;">/Users/bryanmiller/Desktop/DYFAM-Scene1</div>
<div class="a" style="left:1719.2px;top:372.1px;width:45.799999999999955px;height:21.799999999999955px;background:#4a4a4a;border-radius:4px"></div>
<svg class="a" style="left:1719px;top:372px" width="46" height="22"><g fill="#e8e8e8"><rect x="17.6" y="14.6" width="2.2" height="2.2"/><rect x="21.6" y="14.6" width="2.2" height="2.2"/><rect x="25.6" y="14.6" width="2.2" height="2.2"/></g></svg>
<div class="a" style="left:1415px;top:405px;width:157.5px;height:22px;background:#4f4f4f;border-radius:4px"></div>
<div class="a t" style="left:1435.10px;top:411.00px;font-size:12.50px;line-height:12.50px;color:#e8e8f2;font-weight:400;letter-spacing:0.406px;">Open Output Folder</div>
<svg class="a" style="left:1684px;top:407.6px" width="25" height="17" viewBox="0 0 25 17"><rect x="0.3" y="1.6" width="22" height="13.6" rx="6.8" fill="#4a8acb"/><circle cx="16" cy="8.4" r="8" fill="#d2d2d2"/></svg>
<div class="a t" style="left:1713.50px;top:411.00px;font-size:12.50px;line-height:12.50px;color:#e8e8f2;font-weight:400;letter-spacing:0.679px;">Options</div>
<div class="a" style="left:1286px;top:439px;width:530px;height:1.5px;background:#c9c9d0"></div>
<div class="a" style="left:1286px;top:440.5px;width:530px;height:339.0px;background:#242424;border-radius:0 0 10px 10px"></div>
<div class="a" style="left:1302.1px;top:449.2px;width:303.3000000000002px;height:24.5px;background:#1a1a1a;border:1px solid #111;border-radius:4px;box-sizing:border-box;box-shadow:0 1px 0 #3a3a3a"></div>
<div class="a t" style="left:1307.30px;top:456.00px;font-size:12.50px;line-height:12.50px;color:#f4f4fa;font-weight:400;letter-spacing:0.436px;-webkit-text-stroke:0.55px currentColor">Finished</div>
<div class="a" style="left:1615px;top:449.9px;width:70px;height:22.0px;background:#393939;border-radius:4px"></div>
<div class="a t" style="left:1630.20px;top:456.00px;font-size:12.50px;line-height:12.50px;color:#8c8c94;font-weight:400;letter-spacing:0.005px;">Cancel</div>
<div class="a" style="left:1695px;top:449.9px;width:70px;height:22.0px;background:#4e4e4e;border-radius:4px"></div>
<div class="a t" style="left:1715.80px;top:456.00px;font-size:12.50px;line-height:12.50px;color:#f0f0f8;font-weight:400;letter-spacing:0.306px;">Start</div>
<div class="a" style="left:1286px;top:498.9px;width:120px;height:19.600000000000023px;background:#4a8fcf;border-radius:0 3px 0 0"></div>
<div class="a t" style="left:1299.80px;top:502.00px;font-size:12.50px;line-height:12.50px;color:#1c2532;font-weight:400;letter-spacing:0.429px;">Decent Sampler</div>
<div class="a" style="left:1286px;top:517.8px;width:530px;height:1.8000000000000682px;background:#4a8fcf"></div>
<svg class="a" style="left:1308px;top:553.6px" width="25" height="17" viewBox="0 0 25 17"><rect x="0.3" y="1.6" width="22" height="13.6" rx="6.8" fill="#4a8acb"/><circle cx="16" cy="8.4" r="8" fill="#d2d2d2"/></svg>
<div class="a t" style="left:1337.50px;top:557.00px;font-size:12.50px;line-height:12.50px;color:#e8e8f2;font-weight:400;letter-spacing:0.481px;">Generate Decent Sampler XML file</div>
<div class="a t" style="left:1654.40px;top:552.00px;font-size:14.00px;line-height:14.00px;color:#6fa0d6;font-weight:400;letter-spacing:0.654px;">Learn more...</div>
<div class="a" style="left:1654.4px;top:566.1px;width:91.09999999999991px;height:1.1999999999999318px;background:#6fa0d6"></div>
<div class="a" style="left:1362.2px;top:587.2px;width:294.79999999999995px;height:23.59999999999991px;background:#555;border:1px solid #7a7a7a;box-sizing:border-box"></div>
<div class="a t" style="left:1313.60px;top:594.00px;font-size:12.50px;line-height:12.50px;color:#e8e8f2;font-weight:400;letter-spacing:0.256px;">Name:</div>
<div class="a t" style="left:1367.50px;top:593.00px;font-size:12.50px;line-height:12.50px;color:#f0f0f8;font-weight:400;letter-spacing:0.063px;">Don't You (Forget About Me) – Scene 1 (MODX)</div>
<svg class="a" style="left:1308px;top:627.6px" width="25" height="17" viewBox="0 0 25 17"><rect x="1.7" y="1.6" width="22.3" height="13.6" rx="6.8" fill="#606060"/><circle cx="8" cy="8.4" r="8" fill="#d2d2d2"/></svg>
<div class="a t" style="left:1337.50px;top:631.00px;font-size:12.50px;line-height:12.50px;color:#e8e8f2;font-weight:400;letter-spacing:0.603px;">Use a template for new samples</div>
<div class="a" style="left:1445px;top:664.2px;width:295px;height:23.5px;background:#555;border:1px solid #7a7a7a;box-sizing:border-box"></div>
<div class="a t" style="left:1344.50px;top:671.00px;font-size:12.50px;line-height:12.50px;color:#e8e8f2;font-weight:400;letter-spacing:0.760px;">Template file:</div>
<div class="a" style="left:1749px;top:664px;width:46px;height:22px;background:#4a4a4a;border-radius:4px"></div>
<svg class="a" style="left:1749px;top:664px" width="46" height="22"><g fill="#e8e8e8"><rect x="17.6" y="14.6" width="2.2" height="2.2"/><rect x="21.6" y="14.6" width="2.2" height="2.2"/><rect x="25.6" y="14.6" width="2.2" height="2.2"/></g></svg>
<svg class="a" style="left:1308px;top:703.6px" width="25" height="17" viewBox="0 0 25 17"><rect x="1.7" y="1.6" width="22.3" height="13.6" rx="6.8" fill="#606060"/><circle cx="8" cy="8.4" r="8" fill="#d2d2d2"/></svg>
<div class="a t" style="left:1337.70px;top:707.00px;font-size:12.50px;line-height:12.50px;color:#e8e8f2;font-weight:400;letter-spacing:0.721px;">Merge with an existing preset</div>
<svg class="a" style="left:1308px;top:743.6px" width="25" height="17" viewBox="0 0 25 17"><rect x="1.7" y="1.6" width="22.3" height="13.6" rx="6.8" fill="#606060"/><circle cx="8" cy="8.4" r="8" fill="#d2d2d2"/></svg>
<div class="a t" style="left:1337.70px;top:747.00px;font-size:12.50px;line-height:12.50px;color:#e8e8f2;font-weight:400;letter-spacing:0.540px;">Reposition samples</div>
<div class="a" style="left:1544.1px;top:743px;width:44.0px;height:19.700000000000045px;background:#3a3a3a"></div>
<div class="a t" style="left:1491.90px;top:747.00px;font-size:12.50px;line-height:12.50px;color:#e8e8f2;font-weight:400;letter-spacing:0.469px;">Start at:</div>
<div class="a t" style="left:1549.50px;top:748.00px;font-size:12.50px;line-height:12.50px;color:#e8e8f2;font-weight:400;letter-spacing:1.325px;">60</div>
<div class="a t" style="left:1597.00px;top:749.00px;font-size:12.00px;line-height:12.00px;color:#e8e8f2;font-weight:400;letter-spacing:0.125px;">C3</div>
<div class="a" style="left:1626px;top:779.5px;width:58.5px;height:27.5px;background:linear-gradient(#5fb4e6,#4aa2d8);border-radius:0 0 3px 3px"></div>
<div class="a" style="left:1756px;top:779.5px;width:42px;height:30.5px;background:linear-gradient(#f0f0f0,#d8d8d8)"></div>
<div class="a t" style="left:1600.80px;top:823.00px;font-size:12.00px;line-height:12.00px;color:#f4f4f4;font-weight:700;letter-spacing:-0.035px;">KRONOS MASTER</div>
<div class="a t" style="left:1726.00px;top:823.00px;font-size:12.75px;line-height:12.75px;color:#f4f4f4;font-weight:700;letter-spacing:0.000px;">axel f lead.jup4</div>
</body></html>
